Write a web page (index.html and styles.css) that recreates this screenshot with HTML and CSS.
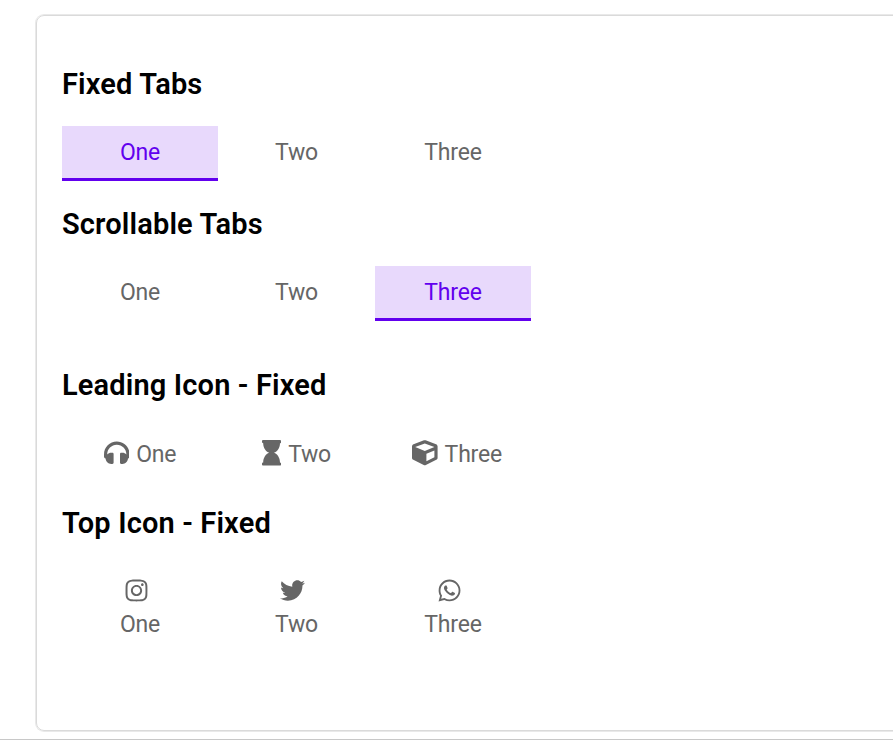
FILE: index.html
```html
<!DOCTYPE html>
<html lang="en">
<head>
<meta charset="utf-8">
<title>Tabs</title>
<link rel="stylesheet" href="styles.css">
</head>
<body>
<main class="card">
  <section class="group">
    <h2>Fixed Tabs</h2>
    <div class="tabs"><div class="tab active">One</div><div class="tab">Two</div><div class="tab">Three</div></div>
  </section>
  <section class="group scrollable">
    <h2>Scrollable Tabs</h2>
    <div class="tabs"><div class="tab">One</div><div class="tab">Two</div><div class="tab active">Three</div></div>
  </section>
  <section class="group leading">
    <h2>Leading Icon - Fixed</h2>
    <div class="tabs">
      <div class="tab"><svg class="icon" viewBox="0 0 512 512"><path d="M256 32C114.520 32 0 146.497 0 288v48a32 32 0 0 0 17.689 28.622l14.383 7.191C34.083 431.903 83.421 480 144 480h24c13.255 0 24-10.745 24-24V280c0-13.255-10.745-24-24-24h-24c-31.342 0-59.671 12.879-80 33.627V288c0-105.869 86.131-192 192-192s192 86.131 192 192v1.627C427.671 268.879 399.342 256 368 256h-24c-13.255 0-24 10.745-24 24v176c0 13.255 10.745 24 24 24h24c60.579 0 109.917-48.098 111.928-108.187l14.382-7.191A32 32 0 0 0 512 336v-48c0-141.479-114.496-256-256-256z"/></svg><span>One</span></div>
      <div class="tab"><svg class="icon narrow" viewBox="0 0 384 512"><path d="M360 64c13.255 0 24-10.745 24-24V24c0-13.255-10.745-24-24-24H24C10.745 0 0 10.745 0 24v16c0 13.255 10.745 24 24 24 0 90.965 51.016 167.734 120.842 192C75.016 280.266 24 357.035 24 448c-13.255 0-24 10.745-24 24v16c0 13.255 10.745 24 24 24h336c13.255 0 24-10.745 24-24v-16c0-13.255-10.745-24-24-24 0-90.965-51.016-167.734-120.842-192C308.984 231.734 360 154.965 360 64z"/></svg><span>Two</span></div>
      <div class="tab"><svg class="icon" viewBox="0 0 512 512"><path d="M239.100 6.300l-208 78c-18.700 7-31.100 25-31.100 45v225.100c0 18.200 10.300 34.800 26.500 42.900l208 104c13.500 6.800 29.400 6.800 42.900 0l208-104c16.300-8.100 26.500-24.800 26.500-42.900V129.300c0-20-12.400-37.900-31.100-44.900l-208-78C262 2.200 250 2.200 239.100 6.300zM256 68.400l192 72v1.100l-192 78-192-78v-1.100l192-72zm32 356V275.500l160-65v133.900l-160 80z"/></svg><span>Three</span></div>
    </div>
  </section>
  <section class="group top">
    <h2>Top Icon - Fixed</h2>
    <div class="tabs">
      <div class="tab"><svg class="icon" viewBox="0 0 448 512"><path d="M224.100 141c-63.600 0-114.900 51.300-114.900 114.900s51.300 114.900 114.900 114.900S339 319.500 339 255.900 287.700 141 224.100 141zm0 189.600c-41.100 0-74.700-33.500-74.700-74.700s33.500-74.700 74.700-74.700 74.700 33.500 74.700 74.700-33.600 74.700-74.700 74.700zm146.400-194.300c0 14.900-12 26.800-26.800 26.800-14.900 0-26.800-12-26.800-26.800s12-26.800 26.800-26.800 26.800 12 26.800 26.800zm76.100 27.200c-1.700-35.900-9.900-67.700-36.200-93.900-26.200-26.200-58-34.400-93.900-36.200-37-2.100-147.900-2.100-184.900 0-35.800 1.700-67.600 9.900-93.900 36.100s-34.400 58-36.200 93.900c-2.100 37-2.100 147.900 0 184.900 1.700 35.900 9.900 67.700 36.200 93.900s58 34.400 93.900 36.200c37 2.100 147.900 2.100 184.900 0 35.900-1.700 67.700-9.900 93.900-36.200 26.200-26.200 34.400-58 36.200-93.900 2.100-37 2.100-147.800 0-184.800zM398.800 388c-7.800 19.600-22.900 34.700-42.600 42.600-29.500 11.700-99.500 9-132.100 9s-102.700 2.600-132.100-9c-19.600-7.800-34.700-22.900-42.600-42.600-11.700-29.500-9-99.500-9-132.100s-2.600-102.700 9-132.100c7.800-19.600 22.900-34.700 42.600-42.600 29.500-11.700 99.500-9 132.100-9s102.700-2.600 132.100 9c19.600 7.800 34.700 22.900 42.600 42.600 11.700 29.500 9 99.500 9 132.100s2.700 102.700-9 132.100z"/></svg><span>One</span></div>
      <div class="tab"><svg class="icon" viewBox="0 0 512 512"><path d="M459.370 151.716c.325 4.548.325 9.097.325 13.645 0 138.720-105.583 298.558-298.558 298.558-59.452 0-114.680-17.219-161.137-47.106 8.447.974 16.568 1.299 25.340 1.299 49.055 0 94.213-16.568 130.274-44.832-46.132-.975-84.792-31.188-98.112-72.772 6.498.974 12.995 1.624 19.818 1.624 9.421 0 18.843-1.300 27.614-3.573-48.081-9.747-84.143-51.980-84.143-102.985v-1.299c13.969 7.797 30.214 12.670 47.431 13.319-28.264-18.843-46.781-51.005-46.781-87.391 0-19.492 5.197-37.360 14.294-52.954 51.655 63.675 129.300 105.258 216.365 109.807-1.624-7.797-2.599-15.918-2.599-24.040 0-57.828 46.782-104.934 104.934-104.934 30.213 0 57.502 12.670 76.670 33.137 23.715-4.548 46.456-13.320 66.599-25.340-7.798 24.366-24.366 44.833-46.132 57.827 21.117-2.273 41.584-8.122 60.426-16.243-14.292 20.791-32.161 39.308-52.628 54.253z"/></svg><span>Two</span></div>
      <div class="tab"><svg class="icon" viewBox="0 0 448 512"><path d="M380.900 97.100C339 55.100 283.200 32 223.900 32c-122.400 0-222 99.600-222 222 0 39.100 10.200 77.300 29.600 111L0 480l117.700-30.900c32.400 17.700 68.900 27 106.100 27h.1c122.300 0 224.100-99.600 224.100-222 0-59.300-25.200-115-67.100-157zm-157 341.600c-33.200 0-65.700-8.900-94-25.700l-6.700-4-69.800 18.300L72 359.200l-4.400-7c-18.500-29.400-28.200-63.300-28.200-98.200 0-101.700 82.800-184.500 184.600-184.500 49.300 0 95.600 19.200 130.400 54.100 34.800 34.900 56.200 81.200 56.100 130.500 0 101.800-84.900 184.600-186.600 184.600zm101.200-138.200c-5.500-2.800-32.800-16.200-37.900-18-5.100-1.900-8.800-2.800-12.500 2.800-3.700 5.600-14.300 18-17.600 21.800-3.200 3.700-6.500 4.200-12 1.400-32.600-16.300-54-29.100-75.500-66-5.700-9.800 5.700-9.100 16.300-30.300 1.800-3.700.9-6.900-.5-9.700-1.400-2.800-12.500-30.100-17.100-41.200-4.500-10.800-9.100-9.300-12.500-9.500-3.200-.2-6.900-.2-10.600-.2-3.700 0-9.700 1.400-14.800 6.900-5.100 5.600-19.400 19-19.400 46.300 0 27.300 19.900 53.700 22.600 57.400 2.800 3.700 39.100 59.700 94.800 83.800 35.200 15.200 49 16.500 66.600 13.900 10.700-1.600 32.800-13.400 37.400-26.400 4.600-13 4.600-24.100 3.200-26.400-1.300-2.500-5-3.900-10.500-6.600z"/></svg><span>Three</span></div>
    </div>
  </section>
</main>
</body>
</html>
```
FILE: styles.css
```css
* { box-sizing: border-box; }
body {
  margin: 0;
  height: 740px;
  overflow: hidden;
  padding: 15px 0 0 36px;
  background: #fff;
  border-bottom: 1px solid #c8c8c8;
  font-family: Roboto, sans-serif;
  color: #000;
}
.card {
  width: 900px;
  height: 716px;
  padding: 48px 25px 0;
  border: 1px solid #dadada;
  border-radius: 8px;
  box-shadow: 0 0 0 1px #e9e9e9;
}
h2 {
  margin: 0;
  height: 40px;
  font-size: 29px;
  line-height: 40px;
  font-weight: 600;
  letter-spacing: 0.15px;
}
.group { margin-bottom: 23px; }
.scrollable { margin-bottom: 44px; }
.leading { margin-bottom: 20px; }
.tabs {
  display: grid;
  grid-template-columns: repeat(3, 156px);
  column-gap: 0.5px;
  margin-top: 22px;
}
.leading .tabs { margin-top: 23px; }
.tab {
  height: 55px;
  padding-top: 2px;
  display: flex;
  align-items: center;
  justify-content: center;
  font-size: 23px;
  font-weight: 400;
  letter-spacing: -0.2px;
  line-height: 30px;
  color: #666;
  border-bottom: 3px solid transparent;
}
.active {
  color: #6200ee;
  background: #e8d9fc;
  border-bottom-color: #6200ee;
}
.icon {
  width: 25.6px;
  height: 25.6px;
  margin-right: 7px;
  fill: currentColor;
  flex: none;
}
.narrow { width: 19.2px; }
.leading .icon { margin-bottom: 4px; }
.leading .tab:last-child { padding-left: 8px; }
.top .tab {
  height: 89px;
  flex-direction: column;
}
.top .icon {
  width: 25px;
  height: 25px;
  margin: 0 8px 7px 0;
}
```
